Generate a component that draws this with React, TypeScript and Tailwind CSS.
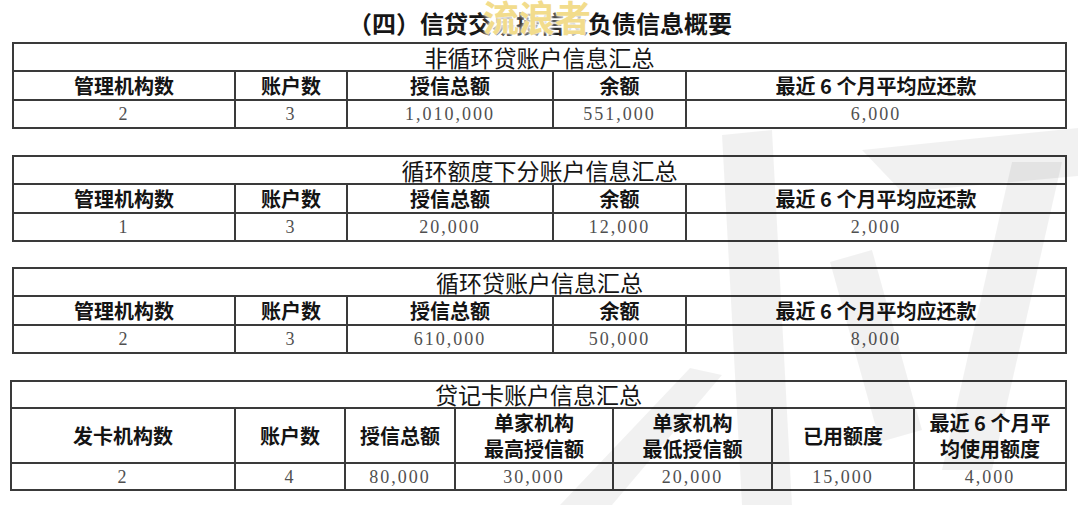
import React from "react";

const cjk = { fontFamily: '"Noto Sans CJK SC", "Noto Sans", sans-serif' };
const serif = { fontFamily: '"Liberation Serif", "DejaVu Serif", serif' };

function Hdr({ children }: { children: React.ReactNode }) {
  return (
    <div className="bg-white flex items-center justify-center text-center font-bold text-[20px] leading-[26px] text-[#141414]" style={cjk}>
      {children}
    </div>
  );
}

function Val({ children }: { children: React.ReactNode }) {
  return (
    <div className="bg-white flex items-center justify-center text-[18px] leading-none tracking-[2px] text-[#505050]" style={serif}>
      {children}
    </div>
  );
}

function Title({ children, span }: { children: React.ReactNode; span: string }) {
  return (
    <div className={`bg-white flex items-center justify-center text-[23px] leading-none text-[#151515] ${span}`} style={cjk}>
      {children}
    </div>
  );
}

function SmallTable({ title, vals, mt }: { title: string; vals: string[]; mt: string }) {
  return (
    <div className={`ml-[12px] w-[1055px] grid grid-cols-[220px_110px_204px_131px_378px] grid-rows-[26px_27px_26px] gap-[2px] p-[2px] bg-[#3a3a3a] ${mt}`}>
      <Title span="col-span-5">{title}</Title>
      <Hdr>管理机构数</Hdr>
      <Hdr>账户数</Hdr>
      <Hdr>授信总额</Hdr>
      <Hdr>余额</Hdr>
      <Hdr>最近 6 个月平均应还款</Hdr>
      {vals.map((v, i) => (
        <Val key={i}>{v}</Val>
      ))}
    </div>
  );
}

export default function App() {
  return (
    <div className="relative w-[1080px] h-[505px] bg-white overflow-hidden">
      <div className="relative h-[42px] pt-[9px] text-center">
        <div className="text-[24px] leading-[28px] font-bold text-[#161616]" style={cjk}>
          （四）信贷交易授信及负债信息概要
        </div>
        <div
          className="absolute left-[483px] top-[-3px] text-[36px] leading-[38px] font-bold tracking-[0px] text-[#f2dc8c]"
          style={{ ...cjk, textShadow: "0 0 3px #fff, 0 0 6px #fff, 0 0 2px #fff" }}
        >
          流浪者
        </div>
      </div>

      <SmallTable mt="mt-0" title="非循环贷账户信息汇总" vals={["2", "3", "1,010,000", "551,000", "6,000"]} />
      <SmallTable mt="mt-[26px]" title="循环额度下分账户信息汇总" vals={["1", "3", "20,000", "12,000", "2,000"]} />
      <SmallTable mt="mt-[25px]" title="循环贷账户信息汇总" vals={["2", "3", "610,000", "50,000", "8,000"]} />

      <div className="ml-[10px] mt-[26px] w-[1057px] grid grid-cols-[222px_108px_108px_156px_157px_140px_150px] grid-rows-[25px_53px_25px] gap-[2px] p-[2px] bg-[#3a3a3a]">
        <Title span="col-span-7">贷记卡账户信息汇总</Title>
        <Hdr>发卡机构数</Hdr>
        <Hdr>账户数</Hdr>
        <Hdr>授信总额</Hdr>
        <Hdr>
          单家机构
          <br />
          最高授信额
        </Hdr>
        <Hdr>
          单家机构
          <br />
          最低授信额
        </Hdr>
        <Hdr>已用额度</Hdr>
        <Hdr>
          最近 6 个月平
          <br />
          均使用额度
        </Hdr>
        <Val>2</Val>
        <Val>4</Val>
        <Val>80,000</Val>
        <Val>30,000</Val>
        <Val>20,000</Val>
        <Val>15,000</Val>
        <Val>4,000</Val>
      </div>

      <svg className="absolute inset-0 pointer-events-none" width="1080" height="505" viewBox="0 0 1080 505">
        <g fill="rgba(0,0,0,0.055)">
          <polygon points="722,135 772,130 792,505 742,505" />
          <polygon points="560,505 612,505 722,375 690,368" />
          <polygon points="862,150 1078,128 1078,176 902,192" />
          <polygon points="1012,162 1062,162 992,470 942,470" />
          <polygon points="830,262 872,250 922,430 880,442" />
        </g>
      </svg>
    </div>
  );
}
